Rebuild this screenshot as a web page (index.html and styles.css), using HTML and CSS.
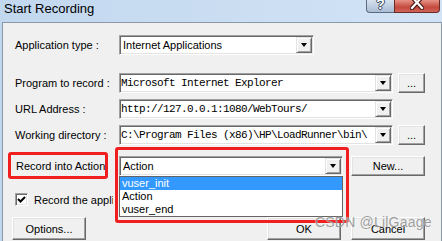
FILE: index.html
```html
<!DOCTYPE html>
<html>
<head>
  <meta charset="UTF-8">
  <title>Start Recording</title>
  <link rel="stylesheet" href="styles.css">
</head>
<body>
  <div class="window">
    <div class="titlebar">
      <span class="title">Start Recording</span>
      <div class="caption">
        <span class="cap-btn help"><span class="q">?</span></span>
        <span class="cap-btn close">
          <svg width="14" height="10" viewBox="0 0 14 10">
            <path d="M2 -3 L12 8 M12 -3 L2 8" stroke="#4a1c18" stroke-width="4.5" stroke-linecap="square"/>
            <path d="M2 -3 L12 8 M12 -3 L2 8" stroke="#fff" stroke-width="2.2" stroke-linecap="square"/>
          </svg>
        </span>
      </div>
    </div>

    <div class="dialog">
      <div class="row r-app">
        <span class="lbl">Application type :</span>
        <div class="combo w-app"><span class="val">Internet Applications</span><span class="drop"></span></div>
      </div>
      <div class="row r-prog">
        <span class="lbl">Program to record :</span>
        <div class="combo w-long"><span class="val mono">Microsoft Internet Explorer</span><span class="drop"></span></div>
        <span class="btn dots">...</span>
      </div>
      <div class="row r-url">
        <span class="lbl">URL Address :</span>
        <div class="combo w-long"><span class="val mono">http://127.0.0.1:1080/WebTours/</span><span class="drop"></span></div>
      </div>
      <div class="row r-dir">
        <span class="lbl">Working directory :</span>
        <div class="combo w-long"><span class="val mono">C:\Program Files (x86)\HP\LoadRunner\bin\</span><span class="drop"></span></div>
        <span class="btn dots">...</span>
      </div>
      <div class="row r-action">
        <span class="lbl lbl-action">Record into Action</span>
        <div class="combo w-action">
          <span class="val">Action</span><span class="drop"></span>
          <div class="list">
            <div class="item sel">vuser_init</div>
            <div class="item">Action</div>
            <div class="item">vuser_end</div>
          </div>
        </div>
        <span class="btn btn-new">New...</span>
      </div>
      <div class="row r-check">
        <span class="check">
          <svg width="11" height="11" viewBox="0 0 11 11"><path d="M2 5 L4.5 7.5 L9 3" fill="none" stroke="#000" stroke-width="2"/></svg>
        </span>
        <span class="check-text">Record the application on startup</span>
      </div>
      <div class="row r-buttons">
        <span class="btn btn-options">Options...</span>
        <span class="btn btn-ok">OK</span>
        <span class="btn btn-cancel">Cancel</span>
      </div>

      <div class="mark-box box-label"></div>
      <div class="mark-box box-combo"></div>
    </div>

    <div class="watermark">CSDN @LilGaage</div>
  </div>
</body>
</html>
```

FILE: styles.css
```css
html, body {
  margin: 0;
  padding: 0;
  overflow: hidden;
}
body {
  font-family: "Liberation Sans", Arial, sans-serif;
  font-size: 11px;
  color: #000;
  background: #f0f0f0;
}
.window {
  position: relative;
  width: 442px;
  height: 241px;
  overflow: hidden;
  background: linear-gradient(to right, #c2d8ef, #d2e3f5);
}

/* title bar */
.titlebar {
  height: 22px;
  display: flex;
  align-items: flex-start;
}
.title {
  font-size: 13px;
  line-height: 18px;
  padding-left: 4px;
}
.caption {
  margin-left: auto;
  margin-right: 2px;
  display: flex;
}
.cap-btn {
  height: 13px;
  box-sizing: border-box;
  display: flex;
  justify-content: center;
  overflow: hidden;
}
.help {
  width: 28px;
  border: 1px solid #5c6c82;
  border-top: none;
  border-right: none;
  border-radius: 0 0 0 4px;
  background: linear-gradient(#d6e1ee, #a9bdd4);
}
.help .q {
  font-weight: bold;
  font-size: 14px;
  line-height: 12px;
  margin-top: -2px;
  color: #fff;
  text-shadow: 1px 0 #3b4a5e, -1px 0 #3b4a5e, 0 1px #3b4a5e, 0 -1px #3b4a5e;
}
.close {
  width: 46px;
  border: 1px solid #6a2a25;
  border-top: none;
  border-radius: 0 0 4px 0;
  background: linear-gradient(#e79386, #c4493d 60%, #d0645a);
}

/* dialog body */
.dialog {
  position: relative;
  box-sizing: border-box;
  width: 440px;
  height: 219px;
  margin-left: 2px;
  padding: 12px 16px 0 12px;
  border: 1px solid #8b98a8;
  border-bottom: none;
  background: #f0f0f0;
}
.row {
  display: flex;
  align-items: center;
  height: 20px;
}
.r-prog { margin-top: 18px; }
.r-url { margin-top: 6px; }
.r-dir { margin-top: 6px; }
.r-action { margin-top: 11px; }
.r-check { margin-top: 17px; height: 13px; }
.r-buttons { margin-top: 11px; height: 23px; }

.lbl {
  width: 104px;
  flex: none;
  white-space: nowrap;
}
.lbl-action {
  padding-left: 1px;
  box-sizing: border-box;
}

/* combo boxes */
.combo {
  position: relative;
  height: 20px;
  box-sizing: border-box;
  display: flex;
  align-items: center;
  flex: none;
  border: 1px solid;
  border-color: #a0a0a0 #fff #fff #a0a0a0;
  box-shadow: inset 1px 1px #696969, inset -1px -1px #e3e3e3;
  background: #fff;
}
.w-app { width: 195px; }
.w-long { width: 274px; }
.w-action { width: 224px; }
.val {
  flex: 1;
  padding-left: 3px;
  white-space: nowrap;
  overflow: hidden;
}
.mono {
  font-family: "Liberation Mono", "Courier New", monospace;
  font-size: 11px;
  letter-spacing: -0.6px;
  padding-left: 1px;
}
.drop {
  width: 16px;
  height: 16px;
  margin-right: 1px;
  flex: none;
  box-sizing: border-box;
  display: flex;
  align-items: center;
  justify-content: center;
  border: 1px solid;
  border-color: #e3e3e3 #696969 #696969 #e3e3e3;
  box-shadow: inset 1px 1px #fff, inset -1px -1px #a0a0a0;
  background: #f0f0f0;
}
.drop::after {
  content: "";
  border-left: 3.5px solid transparent;
  border-right: 3.5px solid transparent;
  border-top: 4px solid #000;
}

/* open dropdown list */
.list {
  position: absolute;
  left: -1px;
  top: 19px;
  width: 224px;
  box-sizing: border-box;
  border: 1px solid #646464;
  background: #fff;
  z-index: 2;
}
.item {
  height: 13px;
  line-height: 13px;
  padding-left: 2px;
}
.item.sel {
  background: #3399ff;
  color: #fff;
}

/* buttons */
.btn {
  box-sizing: border-box;
  display: flex;
  align-items: center;
  justify-content: center;
  flex: none;
  border: 1px solid;
  border-color: #fff #696969 #696969 #fff;
  box-shadow: inset -1px -1px #a0a0a0, inset 1px 1px #e3e3e3;
  background: #f0f0f0;
}
.dots {
  width: 27px;
  height: 20px;
  margin-left: 5px;
  align-items: flex-end;
  padding-bottom: 3px;
}
.btn-new {
  width: 74px;
  height: 20px;
  margin-left: auto;
}
.btn-options {
  width: 74px;
  height: 23px;
  margin-left: -3px;
}
.btn-ok {
  width: 74px;
  height: 23px;
  margin-left: auto;
}
.btn-cancel {
  width: 74px;
  height: 23px;
  margin-left: 10px;
}

/* checkbox */
.check {
  width: 13px;
  height: 13px;
  box-sizing: border-box;
  flex: none;
  display: flex;
  align-items: center;
  justify-content: center;
  border: 1px solid;
  border-color: #a0a0a0 #fff #fff #a0a0a0;
  box-shadow: inset 1px 1px #696969, inset -1px -1px #e3e3e3;
  background: #fff;
}
.check-text {
  margin-left: 6px;
  width: 79px;
  overflow: hidden;
  white-space: nowrap;
}

/* red annotation boxes */
.mark-box {
  position: absolute;
  box-sizing: border-box;
  border: 3px solid #f01e1e;
  border-radius: 3px;
  z-index: 3;
}
.box-label {
  left: 5px;
  top: 129px;
  width: 100px;
  height: 27px;
}
.box-combo {
  left: 112px;
  top: 124px;
  width: 234px;
  height: 76px;
}

.watermark {
  position: absolute;
  left: 315px;
  top: 214px;
  font-size: 14px;
  line-height: 16px;
  letter-spacing: 0.2px;
  color: rgba(115, 115, 115, 0.7);
  text-shadow: 0 0 1px rgba(255, 255, 255, 0.9);
  white-space: nowrap;
  z-index: 4;
}
```
